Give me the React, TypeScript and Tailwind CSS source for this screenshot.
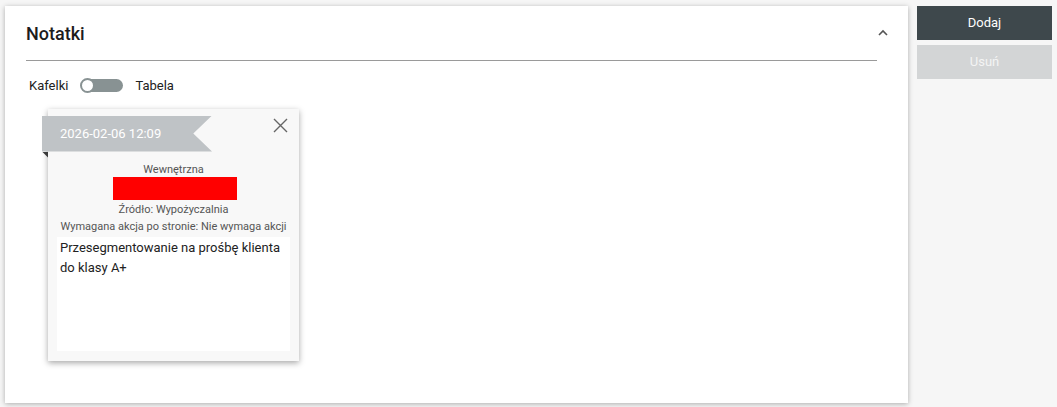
import React, { useState } from 'react';

const NoteCard: React.FC = () => {
  return (
    <div className="relative w-[251px] h-[252px] bg-[#f8f8f8] shadow-[0_2px_6px_rgba(0,0,0,0.35)] flex flex-col">
      {/* wstążka z datą */}
      <div className="absolute left-[-6px] top-[7px] w-[170px] h-[36px] bg-[#bfc3c6] [clip-path:polygon(0_0,100%_0,89%_50%,100%_100%,0_100%)] flex items-center pl-[18px] text-[13px] text-white">
        2026-02-06 12:09
      </div>
      <div className="absolute left-[-6px] top-[43px] w-[6px] h-[6px] bg-[#3a3a3a] [clip-path:polygon(0_0,100%_0,100%_100%)]" />
      <button className="absolute right-[11px] top-[9px] text-[#666]">
        <svg width="15" height="15" viewBox="0 0 15 15" fill="none" stroke="currentColor" strokeWidth="1.4">
          <path d="M1 1 L14 14 M14 1 L1 14" />
        </svg>
      </button>

      <div className="pt-[53px] flex flex-col items-center text-[11px] leading-[17px] text-[#555]">
        <span className="leading-[15px]">Wewnętrzna</span>
        <div className="w-[124px] h-[23px] bg-[#ff0000] ml-[2px]" />
        <span className="mt-px">Źródło: Wypożyczalnia</span>
        <span>Wymagana akcja po stronie: Nie wymaga akcji</span>
      </div>

      <div className="mx-[9px] mt-[2px] mb-[10px] flex-1 bg-white px-[3px] pt-[1px] text-[13px] leading-[20px] text-[#222]">
        Przesegmentowanie na prośbę klienta do klasy A+
      </div>
    </div>
  );
};

export default function App() {
  const [table, setTable] = useState(false);

  return (
    <div className="min-h-[407px] bg-[#f6f6f6] flex gap-[9px] pl-[5px] pt-[6px] font-['Roboto','Liberation_Sans',sans-serif]">
      <div className="w-[903px] h-[397px] bg-white shadow-[0_1px_5px_rgba(0,0,0,0.3)] pl-[21px] pr-[8px] pt-[16px]">
        {/* nagłówek */}
        <div className="flex items-start">
          <div className="flex-1 border-b border-[#9a9a9a] pb-[14px] mr-[-3px]">
            <h2 className="text-[18px] leading-[24px] font-medium text-[#1c1c1c]">Notatki</h2>
          </div>
          <svg className="ml-[2px] mt-[6px]" width="14" height="10" viewBox="0 0 14 10" fill="none" stroke="#555" strokeWidth="1.6">
            <path d="M3 7 L7 3 L11 7" />
          </svg>
          <div className="w-[10px]" />
        </div>

        {/* przełącznik */}
        <div className="flex items-center mt-[15px] ml-[3px] text-[13px] text-[#222]">
          <span>Kafelki</span>
          <button
            onClick={() => setTable(!table)}
            className="relative ml-[13px] w-[42px] h-[13px] rounded-full bg-[#889293]"
          >
            <span
              className={
                table
                  ? 'absolute top-[-1px] right-[-1px] w-[15px] h-[15px] rounded-full bg-white border border-[#889293]'
                  : 'absolute top-[-1px] left-[-1px] w-[15px] h-[15px] rounded-full bg-white border-2 border-[#889293]'
              }
            />
          </button>
          <span className="ml-[12px]">Tabela</span>
        </div>

        <div className="mt-[13px] ml-[22px]">
          <NoteCard />
        </div>
      </div>

      {/* przyciski */}
      <div className="w-[135px] flex flex-col gap-[5px]">
        <button className="h-[34px] bg-[#3e484c] text-white text-[13px]">Dodaj</button>
        <button className="h-[34px] bg-[#d3d5d6] text-[#f4f4f4] text-[13px]">Usuń</button>
      </div>
    </div>
  );
}
